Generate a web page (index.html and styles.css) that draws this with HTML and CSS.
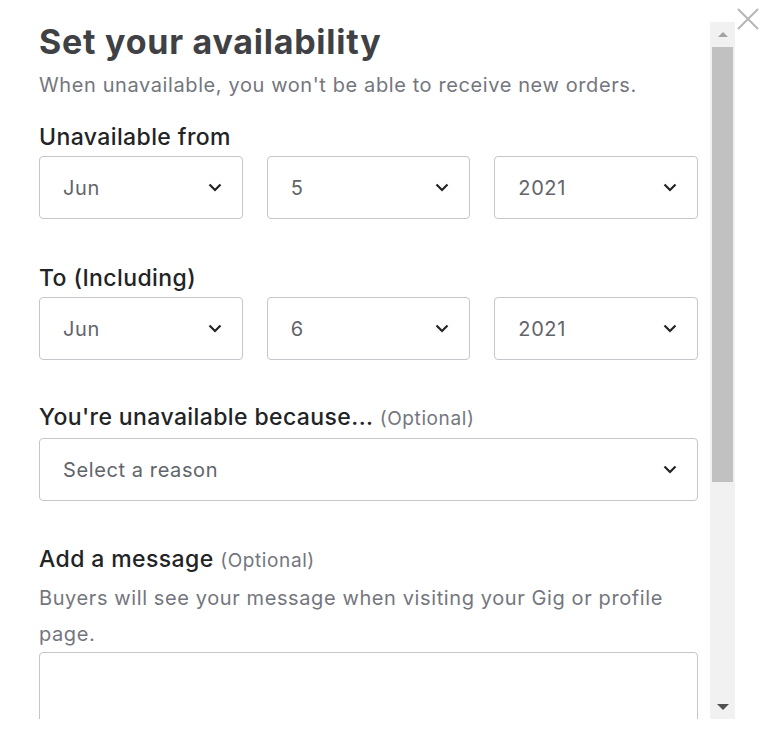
FILE: index.html
```html
<!DOCTYPE html>
<html lang="en">
<head>
<meta charset="utf-8">
<title>Set your availability</title>
<link rel="stylesheet" href="styles.css">
</head>
<body>
<div class="modal">
  <div class="panel">
    <div class="content">
      <h1 class="title">Set your availability</h1>
      <p class="subtitle">When unavailable, you won't be able to receive new orders.</p>

      <div class="group">
        <div class="label">Unavailable from</div>
        <div class="row">
          <div class="select"><span>Jun</span><svg class="chev" width="14" height="9" viewBox="0 0 14 9"><path d="M1.5 1.5 L7 7 L12.5 1.5" stroke="#222325" stroke-width="2.2" fill="none"/></svg></div>
          <div class="select"><span>5</span><svg class="chev" width="14" height="9" viewBox="0 0 14 9"><path d="M1.5 1.5 L7 7 L12.5 1.5" stroke="#222325" stroke-width="2.2" fill="none"/></svg></div>
          <div class="select"><span>2021</span><svg class="chev" width="14" height="9" viewBox="0 0 14 9"><path d="M1.5 1.5 L7 7 L12.5 1.5" stroke="#222325" stroke-width="2.2" fill="none"/></svg></div>
        </div>
      </div>

      <div class="group">
        <div class="label">To (Including)</div>
        <div class="row">
          <div class="select"><span>Jun</span><svg class="chev" width="14" height="9" viewBox="0 0 14 9"><path d="M1.5 1.5 L7 7 L12.5 1.5" stroke="#222325" stroke-width="2.2" fill="none"/></svg></div>
          <div class="select"><span>6</span><svg class="chev" width="14" height="9" viewBox="0 0 14 9"><path d="M1.5 1.5 L7 7 L12.5 1.5" stroke="#222325" stroke-width="2.2" fill="none"/></svg></div>
          <div class="select"><span>2021</span><svg class="chev" width="14" height="9" viewBox="0 0 14 9"><path d="M1.5 1.5 L7 7 L12.5 1.5" stroke="#222325" stroke-width="2.2" fill="none"/></svg></div>
        </div>
      </div>

      <div class="group group-reason">
        <div class="label">You're unavailable because... <span class="opt">(Optional)</span></div>
        <div class="select wide"><span>Select a reason</span><svg class="chev" width="14" height="9" viewBox="0 0 14 9"><path d="M1.5 1.5 L7 7 L12.5 1.5" stroke="#222325" stroke-width="2.2" fill="none"/></svg></div>
      </div>

      <div class="group group-message">
        <div class="label">Add a message <span class="opt">(Optional)</span></div>
        <p class="desc">Buyers will see your message when visiting your Gig or profile page.</p>
        <div class="textarea"></div>
      </div>
    </div>
    <div class="scrollbar">
      <div class="sb-btn"><span class="tri-up"></span></div>
      <div class="sb-thumb"></div>
      <div class="sb-rest"></div>
      <div class="sb-btn"><span class="tri-down"></span></div>
    </div>
  </div>
  <button class="close" aria-label="Close">
    <svg width="22" height="22" viewBox="0 0 22 22"><path d="M1 1 L21 21 M21 1 L1 21" stroke="#b5b6ba" stroke-width="2" fill="none"/></svg>
  </button>
</div>
</body>
</html>
```

FILE: styles.css
```css
* { box-sizing: border-box; }
html, body { margin: 0; padding: 0; background: #fff; }
body {
  font-family: Inter, "Noto Sans", "Liberation Sans", sans-serif;
  color: #222325;
}
.modal {
  position: relative;
  width: 765px;
  height: 741px;
  padding-top: 22px;
}
.close {
  position: absolute;
  top: 8px;
  left: 737px;
  width: 22px;
  height: 22px;
  padding: 0;
  border: 0;
  background: none;
  z-index: 1;
}
.close svg { display: block; }
.panel {
  display: flex;
  width: 735px;
  height: 697px;
}
.content {
  flex: 1;
  overflow: hidden;
  padding: 0 12px 0 39px;
}
.title {
  margin: 0;
  font-size: 34px;
  line-height: 40px;
  font-weight: 700;
  letter-spacing: 0.75px;
  color: #404145;
}
.subtitle {
  margin: 9px 0 0;
  font-size: 20px;
  line-height: 28px;
  letter-spacing: 0.6px;
  color: #74767e;
}
.group { margin-top: 24px; }
.group + .group { margin-top: 45px; }
.group.group-reason { margin-top: 43px; }
.group.group-message { margin-top: 44px; }
.label {
  font-size: 23px;
  line-height: 28px;
  font-weight: 500;
  letter-spacing: 0.4px;
  color: #222325;
  margin-bottom: 5px;
}
.opt {
  font-size: 19px;
  font-weight: 400;
  letter-spacing: 0.6px;
  color: #74767e;
}
.row {
  display: grid;
  grid-template-columns: 1fr 1fr 1fr;
  gap: 24px;
}
.select {
  height: 63px;
  border: 1px solid #c5c6c9;
  border-radius: 4px;
  display: flex;
  align-items: center;
  justify-content: space-between;
  padding: 0 20px 0 23px;
  font-size: 20px;
  letter-spacing: 0.6px;
  color: #62646a;
}
.chev { display: block; }
.desc {
  margin: 2px 0 0;
  font-size: 20px;
  line-height: 36px;
  letter-spacing: 0.6px;
  color: #74767e;
}
.textarea {
  height: 140px;
  border: 1px solid #c5c6c9;
  border-radius: 4px;
}
.scrollbar {
  width: 25px;
  background: #f1f1f1;
  display: flex;
  flex-direction: column;
}
.sb-btn {
  height: 25px;
  display: flex;
  align-items: center;
  justify-content: center;
}
.sb-thumb {
  height: 435px;
  margin: 0 2px;
  background: #c1c1c1;
}
.sb-rest { flex: 1; }
.tri-up {
  width: 0; height: 0;
  border-left: 5px solid transparent;
  border-right: 5px solid transparent;
  border-bottom: 5px solid #a3a3a3;
}
.tri-down {
  width: 0; height: 0;
  border-left: 6px solid transparent;
  border-right: 6px solid transparent;
  border-top: 6px solid #505050;
}
```
